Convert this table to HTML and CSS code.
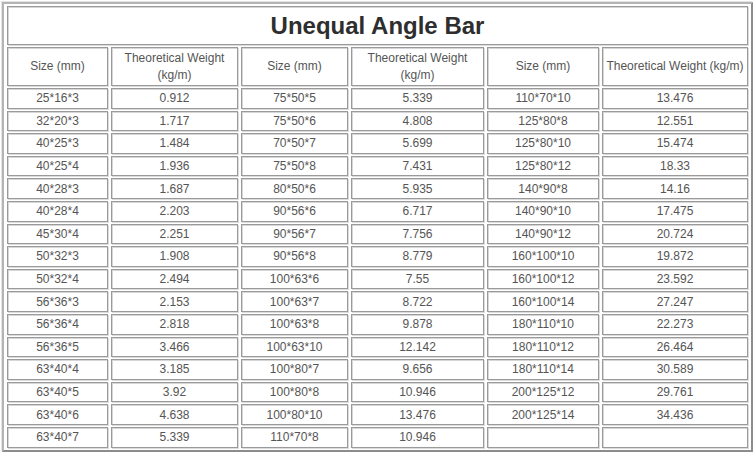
FILE: index.html
```html
<!DOCTYPE html>
<html>
<head>
<meta charset="utf-8">
<link rel="stylesheet" href="styles.css">
</head>
<body>
<table class="angle">
  <tr><th class="title" colspan="6">Unequal Angle Bar</th></tr>
  <tr class="head">
    <th class="c1">Size (mm)</th>
    <th class="c2">Theoretical Weight (kg/m)</th>
    <th class="c3">Size (mm)</th>
    <th class="c4">Theoretical Weight (kg/m)</th>
    <th class="c5">Size (mm)</th>
    <th class="c6">Theoretical Weight (kg/m)</th>
  </tr>
  <tr><td>25*16*3</td><td>0.912</td><td>75*50*5</td><td>5.339</td><td>110*70*10</td><td>13.476</td></tr>
  <tr><td>32*20*3</td><td>1.717</td><td>75*50*6</td><td>4.808</td><td>125*80*8</td><td>12.551</td></tr>
  <tr><td>40*25*3</td><td>1.484</td><td>70*50*7</td><td>5.699</td><td>125*80*10</td><td>15.474</td></tr>
  <tr><td>40*25*4</td><td>1.936</td><td>75*50*8</td><td>7.431</td><td>125*80*12</td><td>18.33</td></tr>
  <tr><td>40*28*3</td><td>1.687</td><td>80*50*6</td><td>5.935</td><td>140*90*8</td><td>14.16</td></tr>
  <tr><td>40*28*4</td><td>2.203</td><td>90*56*6</td><td>6.717</td><td>140*90*10</td><td>17.475</td></tr>
  <tr><td>45*30*4</td><td>2.251</td><td>90*56*7</td><td>7.756</td><td>140*90*12</td><td>20.724</td></tr>
  <tr><td>50*32*3</td><td>1.908</td><td>90*56*8</td><td>8.779</td><td>160*100*10</td><td>19.872</td></tr>
  <tr><td>50*32*4</td><td>2.494</td><td>100*63*6</td><td>7.55</td><td>160*100*12</td><td>23.592</td></tr>
  <tr><td>56*36*3</td><td>2.153</td><td>100*63*7</td><td>8.722</td><td>160*100*14</td><td>27.247</td></tr>
  <tr><td>56*36*4</td><td>2.818</td><td>100*63*8</td><td>9.878</td><td>180*110*10</td><td>22.273</td></tr>
  <tr><td>56*36*5</td><td>3.466</td><td>100*63*10</td><td>12.142</td><td>180*110*12</td><td>26.464</td></tr>
  <tr><td>63*40*4</td><td>3.185</td><td>100*80*7</td><td>9.656</td><td>180*110*14</td><td>30.589</td></tr>
  <tr><td>63*40*5</td><td>3.92</td><td>100*80*8</td><td>10.946</td><td>200*125*12</td><td>29.761</td></tr>
  <tr><td>63*40*6</td><td>4.638</td><td>100*80*10</td><td>13.476</td><td>200*125*14</td><td>34.436</td></tr>
  <tr><td>63*40*7</td><td>5.339</td><td>110*70*8</td><td>10.946</td><td></td><td></td></tr>
</table>
</body>
</html>
```

FILE: styles.css
```css
html, body {
  margin: 0;
  padding: 0;
  background: #ffffff;
}

body {
  padding: 2px 0 0 2px;
  font-family: "Liberation Sans", Arial, sans-serif;
}

.angle {
  border-collapse: separate;
  border-spacing: 3px 2px;
  border: 2px solid;
  border-color: #b4b4b4 #8c8c8c #8c8c8c #b4b4b4;
  box-shadow: -1px -1px 0 #e4e4e4;
}

.angle th,
.angle td {
  box-sizing: border-box;
  border: 1px solid #9a9a9a;
  box-shadow: inset 1px 1px 0 #d6d6d6, 1px 1px 0 #dcdcdc;
  padding: 0;
  text-align: center;
  vertical-align: middle;
  font-weight: normal;
  font-size: 12px;
  color: #555555;
}

.angle td {
  height: 20.6px;
  line-height: 18px;
}

.angle .title {
  height: 39px;
  font-size: 24px;
  font-weight: bold;
  color: #2e2e2e;
  line-height: 30px;
  padding-top: 1px;
}

.head th {
  height: 39px;
  line-height: 17px;
}

.c1 { width: 101px; }
.c2 { width: 127px; padding: 0 8px; }
.c3 { width: 107px; }
.c4 { width: 133px; padding: 0 8px; }
.c5 { width: 112px; }
.c6 { width: 146px; }
```
